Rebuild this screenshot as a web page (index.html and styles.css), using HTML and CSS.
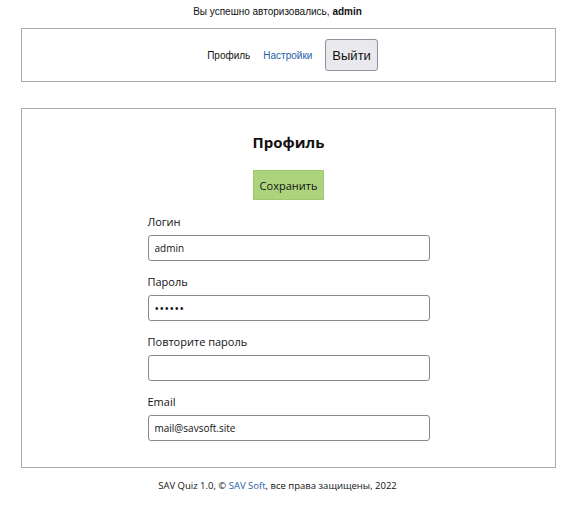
FILE: index.html
```html
<!DOCTYPE html>
<html lang="ru">
<head>
  <meta charset="UTF-8">
  <title>SAV Quiz — Профиль</title>
  <link rel="stylesheet" href="styles.css">
</head>
<body>
  <div class="auth">Вы успешно авторизовались, <b>admin</b></div>

  <div class="menu">
    <a class="menu-item current" href="#">Профиль</a>
    <a class="menu-item" href="#">Настройки</a>
    <button class="logout">Выйти</button>
  </div>

  <div class="panel">
    <h2>Профиль</h2>
    <div class="actions">
      <button class="save">Сохранить</button>
    </div>
    <form class="profile-form">
      <label>Логин</label>
      <input type="text" value="admin">
      <label>Пароль</label>
      <input type="password" class="secret" value="123456">
      <label>Повторите пароль</label>
      <input type="password" class="secret" value="">
      <label>Email</label>
      <input type="text" value="mail@savsoft.site">
    </form>
  </div>

  <div class="footer">SAV Quiz 1.0, &copy; <a href="#">SAV Soft</a>, все права защищены, 2022</div>
</body>
</html>
```

FILE: styles.css
```css
body {
  margin: 0;
  font-family: "Open Sans", "Noto Sans", sans-serif;
  color: #111;
  background: #fff;
}
a {
  color: #1f5ea8;
  text-decoration: none;
}
.auth {
  text-align: center;
  font-family: "Liberation Sans", Arial, sans-serif;
  font-size: 10px;
  line-height: 15px;
  padding: 4px 21px 9px 0;
}
.menu {
  margin: 0 20px 0 21px;
  height: 52px;
  border: 1px solid #aaa;
  display: flex;
  justify-content: center;
  align-items: center;
  gap: 13px;
  font-family: "Liberation Sans", Arial, sans-serif;
  font-size: 10px;
  padding-left: 8px;
}
.menu-item.current {
  color: #111;
}
.logout {
  font-family: inherit;
  font-size: 13px;
  padding: 0 6px;
  height: 32px;
  background: #e9e9ed;
  border: 1px solid #8f8f9d;
  border-radius: 3px;
  color: #111;
}
.panel {
  margin: 26px 20px 0 21px;
  border: 1px solid #aaa;
  padding: 22px 0 26px;
}
h2 {
  margin: 0;
  text-align: center;
  font-size: 15px;
  line-height: 22px;
  font-weight: 700;
}
.actions {
  display: flex;
  justify-content: center;
  margin-top: 17px;
}
.save {
  font-family: inherit;
  font-size: 11px;
  width: 71px;
  height: 30px;
  background: #acd47c;
  border: 1px solid #9fc870;
  color: #111;
  padding: 0;
}
.profile-form {
  width: 282px;
  margin: 13px auto 0;
  display: flex;
  flex-direction: column;
}
.profile-form label {
  font-size: 11px;
  line-height: 17px;
  margin-bottom: 5px;
}
.profile-form input {
  box-sizing: border-box;
  height: 26px;
  border: 1px solid #8a8a8a;
  border-radius: 3px;
  padding: 0 6px;
  font-family: inherit;
  font-size: 10px;
  color: #111;
  margin-bottom: 12px;
}
.profile-form input.secret {
  font-size: 12px;
  letter-spacing: 0.5px;
}
.profile-form input:last-child {
  margin-bottom: 0;
}
.footer {
  text-align: center;
  font-size: 9.5px;
  padding: 11px 21px 0 0;
}
```
